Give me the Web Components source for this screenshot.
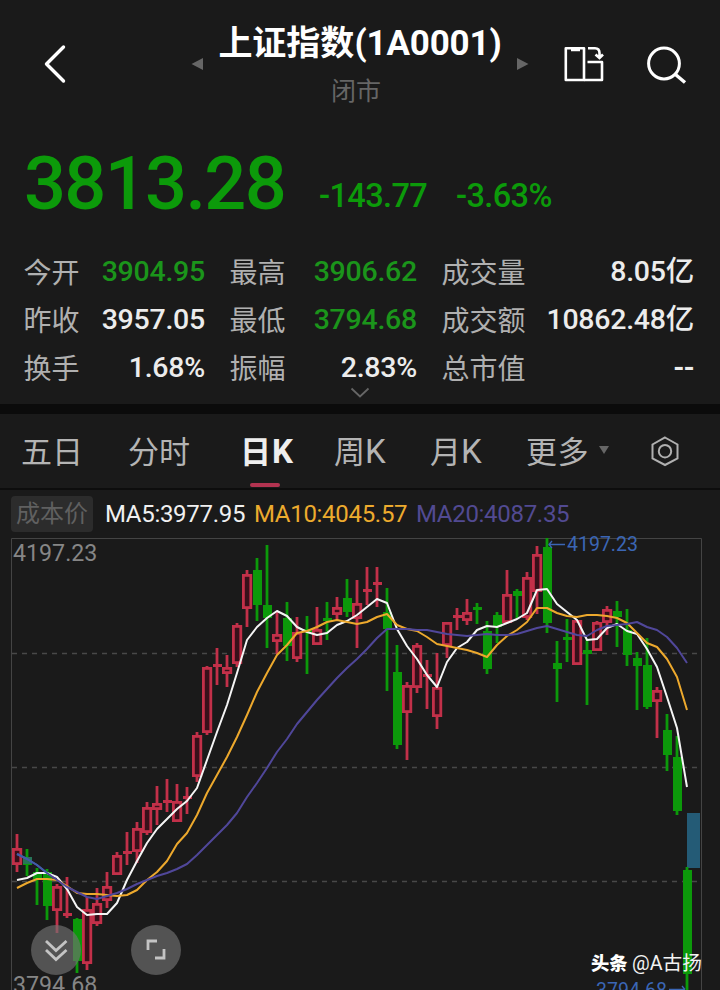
<!DOCTYPE html>
<html lang="zh-CN">
<head>
<meta charset="utf-8">
<title>上证指数</title>
<style>
    body {
        margin: 0;
        width: 720px;
        height: 990px;
        overflow: hidden;
        background: #1a1a1a;
        color: #e8e8e8;
        font-family: Roboto, "Noto Sans CJK SC", sans-serif;
    }
</style>
</head>
<body>
<stock-page>
    <stock-header name="上证指数" code="(1A0001)" status="闭市"></stock-header>
    <price-line price="3813.28" change="-143.77" percent="-3.63%"></price-line>
    <stat-grid>
        <stat-item label="今开" class="down">3904.95</stat-item>
        <stat-item label="最高" class="down">3906.62</stat-item>
        <stat-item label="成交量">8.05亿</stat-item>
        <stat-item label="昨收">3957.05</stat-item>
        <stat-item label="最低" class="down">3794.68</stat-item>
        <stat-item label="成交额">10862.48亿</stat-item>
        <stat-item label="换手">1.68%</stat-item>
        <stat-item label="振幅">2.83%</stat-item>
        <stat-item label="总市值" class="empty">--</stat-item>
    </stat-grid>
    <period-tabs></period-tabs>
    <ma-legend></ma-legend>
    <k-chart></k-chart>
</stock-page>

<script>
class BaseElement extends HTMLElement {
    connectedCallback() {
        this.attachShadow({ mode: 'open' });
        this.shadowRoot.innerHTML = this.render();
    }
}

class StockPage extends BaseElement {
    render() {
        return `
            <style>
                :host { display: flex; flex-direction: column; width: 720px; height: 990px; overflow: hidden; }
            </style>
            <slot></slot>
        `;
    }
}

class StockHeader extends BaseElement {
    render() {
        return `
            <style>
                :host { display: grid; grid-template-columns: 190px 342px 188px; height: 120px; flex: none; }
                svg { display: block; }
                .middle { display: flex; justify-content: space-between; }
                .middle svg { margin-top: 57px; }
                .title { display: flex; flex-direction: column; align-items: center; white-space: nowrap; padding: 22px 1px 0 0; }
                h1 { margin: 0; color: #fff; font-size: 34px; line-height: 42px; font-weight: 700; }
                h1 span { font-size: 35px; letter-spacing: -0.15px; }
                .status { margin: 12px 8px 0 0; font-size: 25px; line-height: 30px; color: #666; }
            </style>
            <svg width="190" height="120" fill="none" stroke="#fff" stroke-width="3.4" stroke-linecap="round" stroke-linejoin="round">
                <path d="M63.500 47 46.500 64 63.500 81"/>
            </svg>
            <div class="middle">
                <svg width="14" height="14" fill="#666"><path d="M1.500 7 13 1V13Z"/></svg>
                <div class="title">
                    <h1>${this.getAttribute('name')}<span>${this.getAttribute('code')}</span></h1>
                    <div class="status">${this.getAttribute('status')}</div>
                </div>
                <svg width="15" height="14" fill="#666"><path d="M0 1 11.500 7 0 13Z"/></svg>
            </div>
            <svg width="188" height="120" fill="none" stroke="#fff" stroke-width="2.6">
                <path d="M33.800 48.200H52V80H33.800Z" stroke-linejoin="round"/>
                <path d="M39 49.500H48" stroke-width="3.5"/>
                <path d="M52 80H70V62H55.500" stroke-linejoin="round"/>
                <path d="M56 48.200H63Q67.500 48.200 67.500 53V57M63.500 54.500 67.500 58 71 54.500"/>
                <circle cx="132" cy="63.500" r="15.400" stroke-width="3"/>
                <path d="M143.500 74.500 153 82.500" stroke-width="3.400"/>
            </svg>
        `;
    }
}

class PriceLine extends BaseElement {
    render() {
        return `
            <style>
                :host { display: flex; height: 128px; flex: none; box-sizing: border-box; padding-left: 24px; color: #0c9a0a; font-weight: 500; align-items: flex-start; }
                .price { width: 295px; font-size: 74px; line-height: 128px; letter-spacing: -1.7px; }
                .change, .percent { font-size: 32.5px; line-height: 152px; letter-spacing: -0.6px; }
                .change { width: 137px; }
            </style>
            <span class="price">${this.getAttribute('price')}</span>
            <span class="change">${this.getAttribute('change')}</span>
            <span class="percent">${this.getAttribute('percent')}</span>
        `;
    }
}

class StatGrid extends BaseElement {
    render() {
        return `
            <style>
                :host { display: flex; flex-direction: column; height: 156px; flex: none; border-bottom: 10px solid #0b0b0b; }
                .grid { display: grid; grid-template-columns: 181px 187px 252px; column-gap: 25px; grid-auto-rows: 48px; padding: 0 26px 0 24px; height: 138px; }
                svg { display: block; margin: 0 auto; }
            </style>
            <div class="grid"><slot></slot></div>
            <svg width="20" height="14" fill="none" stroke="#666" stroke-width="1.800"><path d="M1.500 2.500 10 10.500 18.500 2.500"/></svg>
        `;
    }
}

class StatItem extends BaseElement {
    render() {
        return `
            <style>
                :host { display: flex; justify-content: space-between; line-height: 48px; font-size: 28px; color: #ececec; white-space: nowrap; }
                :host(.down) .value { color: #1b951b; }
                :host(.empty) .value { font-weight: 700; letter-spacing: -0.8px; }
                .label { color: #b0b0b0; font-weight: 400; margin-left: -0.5px; padding-top: 2px; line-height: 48px; height: 46px; }
                .value { font-size: 28.5px; font-weight: 500; letter-spacing: -0.25px; }
            </style>
            <span class="label">${this.getAttribute('label')}</span>
            <span class="value"><slot></slot></span>
        `;
    }
}

class PeriodTabs extends BaseElement {
    render() {
        return `
            <style>
                :host { display: flex; height: 74px; flex: none; border-bottom: 2px solid #0d0d0d; font-size: 31px; line-height: 78px; color: #b4b4b4; padding-left: 21px; }
                span { display: block; white-space: nowrap; }
                b { font-size: 33px; font-weight: inherit; line-height: 1; }
                .active { color: #eee; font-weight: 700; display: flex; flex-direction: column; }
                .active b { margin-left: 1px; }
                .active::after { content: ''; width: 30px; height: 4px; border-radius: 2px; background: #b23350; margin: -9px 0 0 10px; }
                svg { display: block; }
            </style>
            <span style="width: 107px">五日</span>
            <span style="width: 112px">分时</span>
            <span class="active" style="width: 94px"><span>日<b>K</b></span></span>
            <span style="width: 96px">周<b>K</b></span>
            <span style="width: 96px">月<b>K</b></span>
            <span style="width: 70px; letter-spacing: 0.5px">更多</span>
            <svg width="110" height="74" fill="none" stroke="#b0b0b0" stroke-width="2">
                <path d="M3 32H13L8 40Z" fill="#666" stroke="none"/>
                <path d="M69 23.500 81.500 30.500V44.500L69 51 56.500 44.500V30.500Z"/>
                <circle cx="69" cy="37.200" r="6.200"/>
            </svg>
        `;
    }
}

class MaLegend extends BaseElement {
    render() {
        return `
            <style>
                :host { display: flex; align-items: center; height: 48px; flex: none; box-sizing: border-box; padding: 0 0 0 11px; font-size: 24px; line-height: 36px; white-space: nowrap; letter-spacing: -0.3px; }
                .cost { width: 82px; height: 36px; margin-right: 12px; text-align: center; background: #2c2c2c; border-radius: 4px; color: #606060; letter-spacing: 0; }
                .ma5 { width: 149px; color: #f0f0f0; }
                .ma10 { width: 162px; color: #edab2e; }
                .ma20 { color: #524a92; }
            </style>
            <span class="cost">成本价</span>
            <span class="ma5">MA5:3977.95</span>
            <span class="ma10">MA10:4045.57</span>
            <span class="ma20">MA20:4087.35</span>
        `;
    }
}

// r = up, g = down; then high, body top, body bottom, low
const candles = [
    ['r', 834, 848, 865, 872], ['g', 849, 857, 865, 876], ['g', 868, 872, 879, 905], ['g', 869, 872, 906, 920],
    ['r', 884, 886, 911, 933], ['r', 877, 913, 916, 918], ['g', 918, 919, 961, 973], ['r', 897, 909, 964, 970],
    ['r', 888, 903, 924, 926], ['r', 872, 886, 901, 908], ['r', 852, 855, 875, 875], ['r', 832, 851, 854, 865],
    ['r', 822, 828, 852, 863], ['r', 802, 807, 833, 835], ['r', 786, 803, 810, 825], ['r', 779, 800, 803, 812],
    ['r', 784, 801, 822, 822], ['r', 787, 796, 799, 814], ['r', 732, 735, 777, 782], ['r', 666, 667, 733, 735],
    ['r', 648, 664, 667, 685], ['r', 655, 667, 674, 687], ['r', 623, 625, 664, 667], ['r', 570, 574, 609, 627],
    ['g', 558, 570, 605, 621], ['g', 545, 605, 618, 648], ['r', 612, 634, 642, 654], ['g', 602, 618, 646, 661],
    ['r', 617, 632, 659, 662], ['g', 616, 629, 632, 674], ['r', 607, 629, 645, 645], ['g', 602, 618, 621, 640],
    ['r', 597, 607, 615, 620], ['g', 579, 598, 612, 617], ['r', 580, 603, 619, 648], ['r', 567, 589, 592, 605],
    ['r', 567, 582, 585, 607], ['g', 588, 612, 629, 691], ['g', 645, 672, 745, 749], ['r', 682, 685, 713, 760],
    ['r', 643, 645, 688, 693], ['r', 660, 674, 677, 709], ['r', 653, 687, 717, 729], ['r', 622, 622, 646, 658],
    ['r', 608, 615, 618, 630], ['r', 599, 612, 621, 625], ['g', 603, 607, 610, 624], ['g', 621, 631, 669, 674],
    ['g', 612, 615, 627, 643], ['r', 570, 594, 623, 623], ['g', 589, 591, 596, 618], ['r', 572, 577, 618, 620],
    ['r', 546, 554, 592, 614], ['g', 538, 547, 623, 633], ['g', 641, 663, 669, 702], ['g', 619, 637, 640, 662],
    ['r', 620, 620, 665, 665], ['g', 640, 650, 654, 705], ['r', 621, 622, 651, 651], ['r', 606, 609, 623, 635],
    ['g', 601, 611, 617, 647], ['g', 609, 630, 655, 666], ['g', 652, 658, 666, 710], ['g', 638, 665, 707, 709],
    ['r', 687, 690, 702, 738], ['g', 714, 730, 755, 771], ['g', 736, 757, 811, 815], ['g', 867, 870, 974, 990]
];

const ma5 = [880, 878, 873, 873, 877, 889, 907, 915, 914, 914, 903, 880, 861, 843, 829, 819, 809, 801, 788, 760, 732, 705, 673, 640,
    627, 618, 611, 616, 627, 632, 635, 633, 625, 621, 615, 607, 599, 603, 629, 646, 659, 675, 687, 662, 648, 642, 630, 626, 627, 623,
    619, 613, 590, 589, 604, 612, 620, 640, 639, 628, 624, 631, 634, 649, 667, 697, 728, 787];
const ma10 = [888, 883, 879, 879, 880, 886, 893, 894, 894, 895, 896, 895, 890, 880, 872, 861, 844, 833, 815, 793, 775, 757, 737, 715,
    692, 673, 655, 645, 633, 631, 627, 622, 620, 622, 624, 622, 617, 614, 625, 629, 631, 637, 644, 646, 648, 650, 653, 657, 645, 636,
    630, 622, 608, 608, 613, 616, 617, 615, 615, 616, 618, 623, 633, 643, 647, 659, 677, 710];
const ma20 = [854, 859, 865, 873, 880, 887, 892, 897, 899, 896, 893, 889, 884, 880, 876, 873, 869, 864, 855, 845, 835, 825, 813, 797,
    783, 768, 752, 739, 724, 712, 700, 689, 678, 668, 659, 649, 638, 629, 629, 629, 630, 630, 632, 634, 635, 636, 635, 634, 635, 635,
    634, 631, 628, 626, 629, 632, 635, 636, 630, 626, 625, 624, 622, 627, 630, 637, 648, 663];

class KChart extends BaseElement {
    line(values, color) {
        const points = values.map((y, i) => `${17 + i * 10},${y}`).join(' ');
        return `<polyline points="${points}" fill="none" stroke="${color}" stroke-width="2" stroke-linejoin="round"/>`;
    }

    candle([type, high, top, bottom, low], i) {
        const x = 17 + i * 10;
        const color = type === 'r' ? '#c23049' : '#0c990a';
        let body = `<rect x="${x - 4}" y="${top}" width="9" height="${bottom - top}" fill="${color}"/>`;
        if (type === 'r' && bottom - top > 4) {
            body = `<rect x="${x - 3.6}" y="${top + 1.4}" width="7.4" height="${bottom - top - 2.8}" fill="#37101a" stroke="${color}" stroke-width="2.8"/>`;
        }
        return `<path d="M${x} ${high}V${low}" stroke="${color}" stroke-width="2.8"/>${body}`;
    }

    render() {
        return `
            <style>
                :host { display: block; height: 452px; flex: none; }
                svg { display: block; overflow: visible; font-family: Roboto, "Noto Sans CJK SC", sans-serif; }
            </style>
            <svg width="720" height="452" viewBox="0 538 720 452">
                <path d="M11.500 990V538.500H701.500V990" fill="none" stroke="#444"/>
                <path d="M12 653.500H701M12 767.500H701M12 881.500H701" stroke="#484848" stroke-width="1.600" stroke-dasharray="5 5"/>
                <rect x="687" y="813" width="13" height="55" fill="#245b76"/>
                ${candles.map((c, i) => this.candle(c, i)).join('')}
                <rect x="23" y="857" width="9" height="7" fill="#267557"/>
                ${this.line(ma5, '#f5f5f5')}
                ${this.line(ma10, '#eda92d')}
                ${this.line(ma20, '#50479a')}
                <path d="M17 854 27 859 37 865 47 873" fill="none" stroke="#405da8" stroke-width="2"/>
                <text x="13" y="561" font-size="23.200" fill="#868686">4197.23</text>
                <text x="13" y="993" font-size="23.200" fill="#868686">3794.68</text>
                <path d="M549 544.500H565M552 541 549 544.500 552 548" fill="none" stroke="#3b66b5" stroke-width="1.300"/>
                <text x="567" y="551" font-size="19.500" fill="#3b66b5">4197.23</text>
                <text x="596" y="996.500" font-size="19.500" fill="#3b66b5">3794.68</text>
                <path d="M669 989.500H685M682 986 685 989.500" fill="none" stroke="#3b66b5" stroke-width="1.300"/>
                <circle cx="56" cy="950" r="25" fill="#727272" fill-opacity="0.650"/>
                <circle cx="156" cy="950" r="25" fill="#727272" fill-opacity="0.650"/>
                <g fill="none" stroke="#c4c4c4" stroke-width="2.800">
                    <path d="M46 941 56 950.500 66.500 941M46 950 56 959.500 66.500 950"/>
                    <path d="M148 950V941H157M164 949V958H155"/>
                </g>
                <text x="591" y="970" font-size="18.300" font-weight="900" fill="#fff">头条</text>
                <text x="632" y="970" font-size="19.700" fill="#f2f2f2">@A古扬</text>
            </svg>
        `;
    }
}

customElements.define('stock-page', StockPage);
customElements.define('stock-header', StockHeader);
customElements.define('price-line', PriceLine);
customElements.define('stat-grid', StatGrid);
customElements.define('stat-item', StatItem);
customElements.define('period-tabs', PeriodTabs);
customElements.define('ma-legend', MaLegend);
customElements.define('k-chart', KChart);
</script>
</body>
</html>
